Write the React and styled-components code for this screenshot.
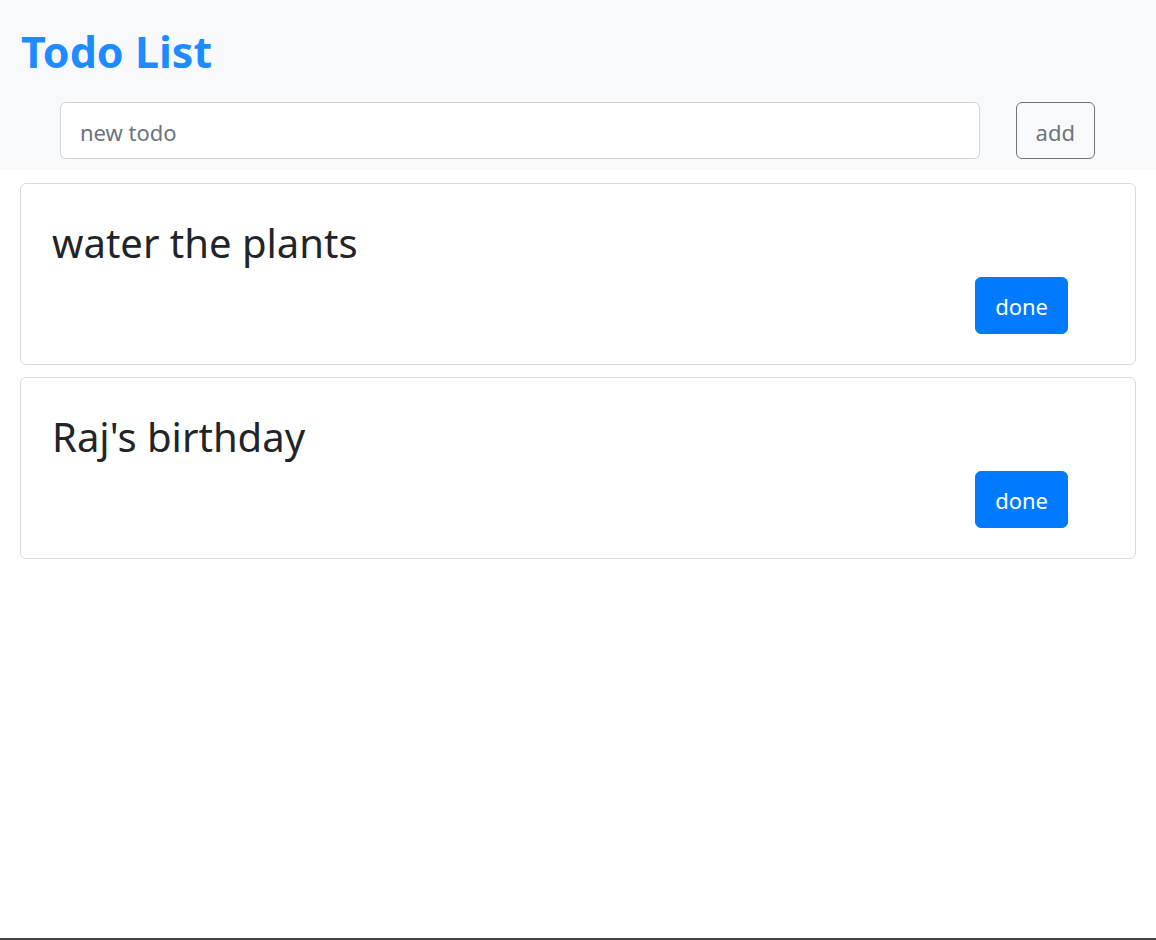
import styled, { createGlobalStyle } from "styled-components";

const GlobalStyle = createGlobalStyle`
  body {
    margin: 0;
    background: #fff;
    font-family: "Noto Sans", "Open Sans", sans-serif;
    color: #212529;
  }
  #root {
    min-height: 940px;
    box-sizing: border-box;
    border-bottom: 2px solid #444;
  }
`;

const Header = styled.header`
  background: #f8f9fa;
  padding: 26px 61px 11px 22px;
  height: 170px;
  box-sizing: border-box;
`;

const Title = styled.h1`
  margin: 0 0 24px -1px;
  font-size: 43px;
  line-height: 52px;
  font-weight: 700;
  color: #1e8cff;
`;

const AddRow = styled.div`
  display: flex;
  align-items: center;
  gap: 36px;
  padding-left: 38px;
`;

const TodoInput = styled.input`
  flex: 1;
  height: 57px;
  box-sizing: border-box;
  padding: 2px 19px 0;
  border: 1px solid #ced4da;
  border-radius: 6px;
  background: #fff;
  font-family: inherit;
  font-size: 22px;
  color: #495057;
  outline: none;

  &::placeholder {
    color: #6c757d;
  }
`;

const Button = styled.button`
  height: 57px;
  box-sizing: border-box;
  padding: ${(p) => (p.$primary ? 0 : 2)}px ${(p) => p.$pad}px 0;
  border-radius: 6px;
  font-family: inherit;
  font-size: 22px;
  cursor: pointer;
  border: 1px solid ${(p) => (p.$primary ? "#007bff" : "#6c757d")};
  background: ${(p) => (p.$primary ? "#007bff" : "transparent")};
  color: ${(p) => (p.$primary ? "#fff" : "#6c757d")};
`;

const List = styled.main`
  display: flex;
  flex-direction: column;
  gap: 12px;
  padding: 13px 20px;
`;

const Card = styled.div`
  height: 182px;
  box-sizing: border-box;
  border: 1px solid #dcdcdc;
  border-radius: 6px;
  padding: 30px 67px 30px 31px;
  display: flex;
  flex-direction: column;
  justify-content: space-between;
`;

const TodoText = styled.h2`
  margin: 0;
  font-size: 40px;
  line-height: 58px;
  font-weight: 400;
  color: #212529;
`;

const CardFooter = styled.div`
  display: flex;
  justify-content: flex-end;
`;

const todos = ["water the plants", "Raj's birthday"];

const App = () => {
  return (
    <>
      <GlobalStyle />
      <Header>
        <Title>Todo List</Title>
        <AddRow>
          <TodoInput type="text" placeholder="new todo" />
          <Button $pad={19}>add</Button>
        </AddRow>
      </Header>
      <List>
        {todos.map((t) => (
          <Card key={t}>
            <TodoText>{t}</TodoText>
            <CardFooter>
              <Button $primary $pad={19}>
                done
              </Button>
            </CardFooter>
          </Card>
        ))}
      </List>
    </>
  );
};

export default App;
